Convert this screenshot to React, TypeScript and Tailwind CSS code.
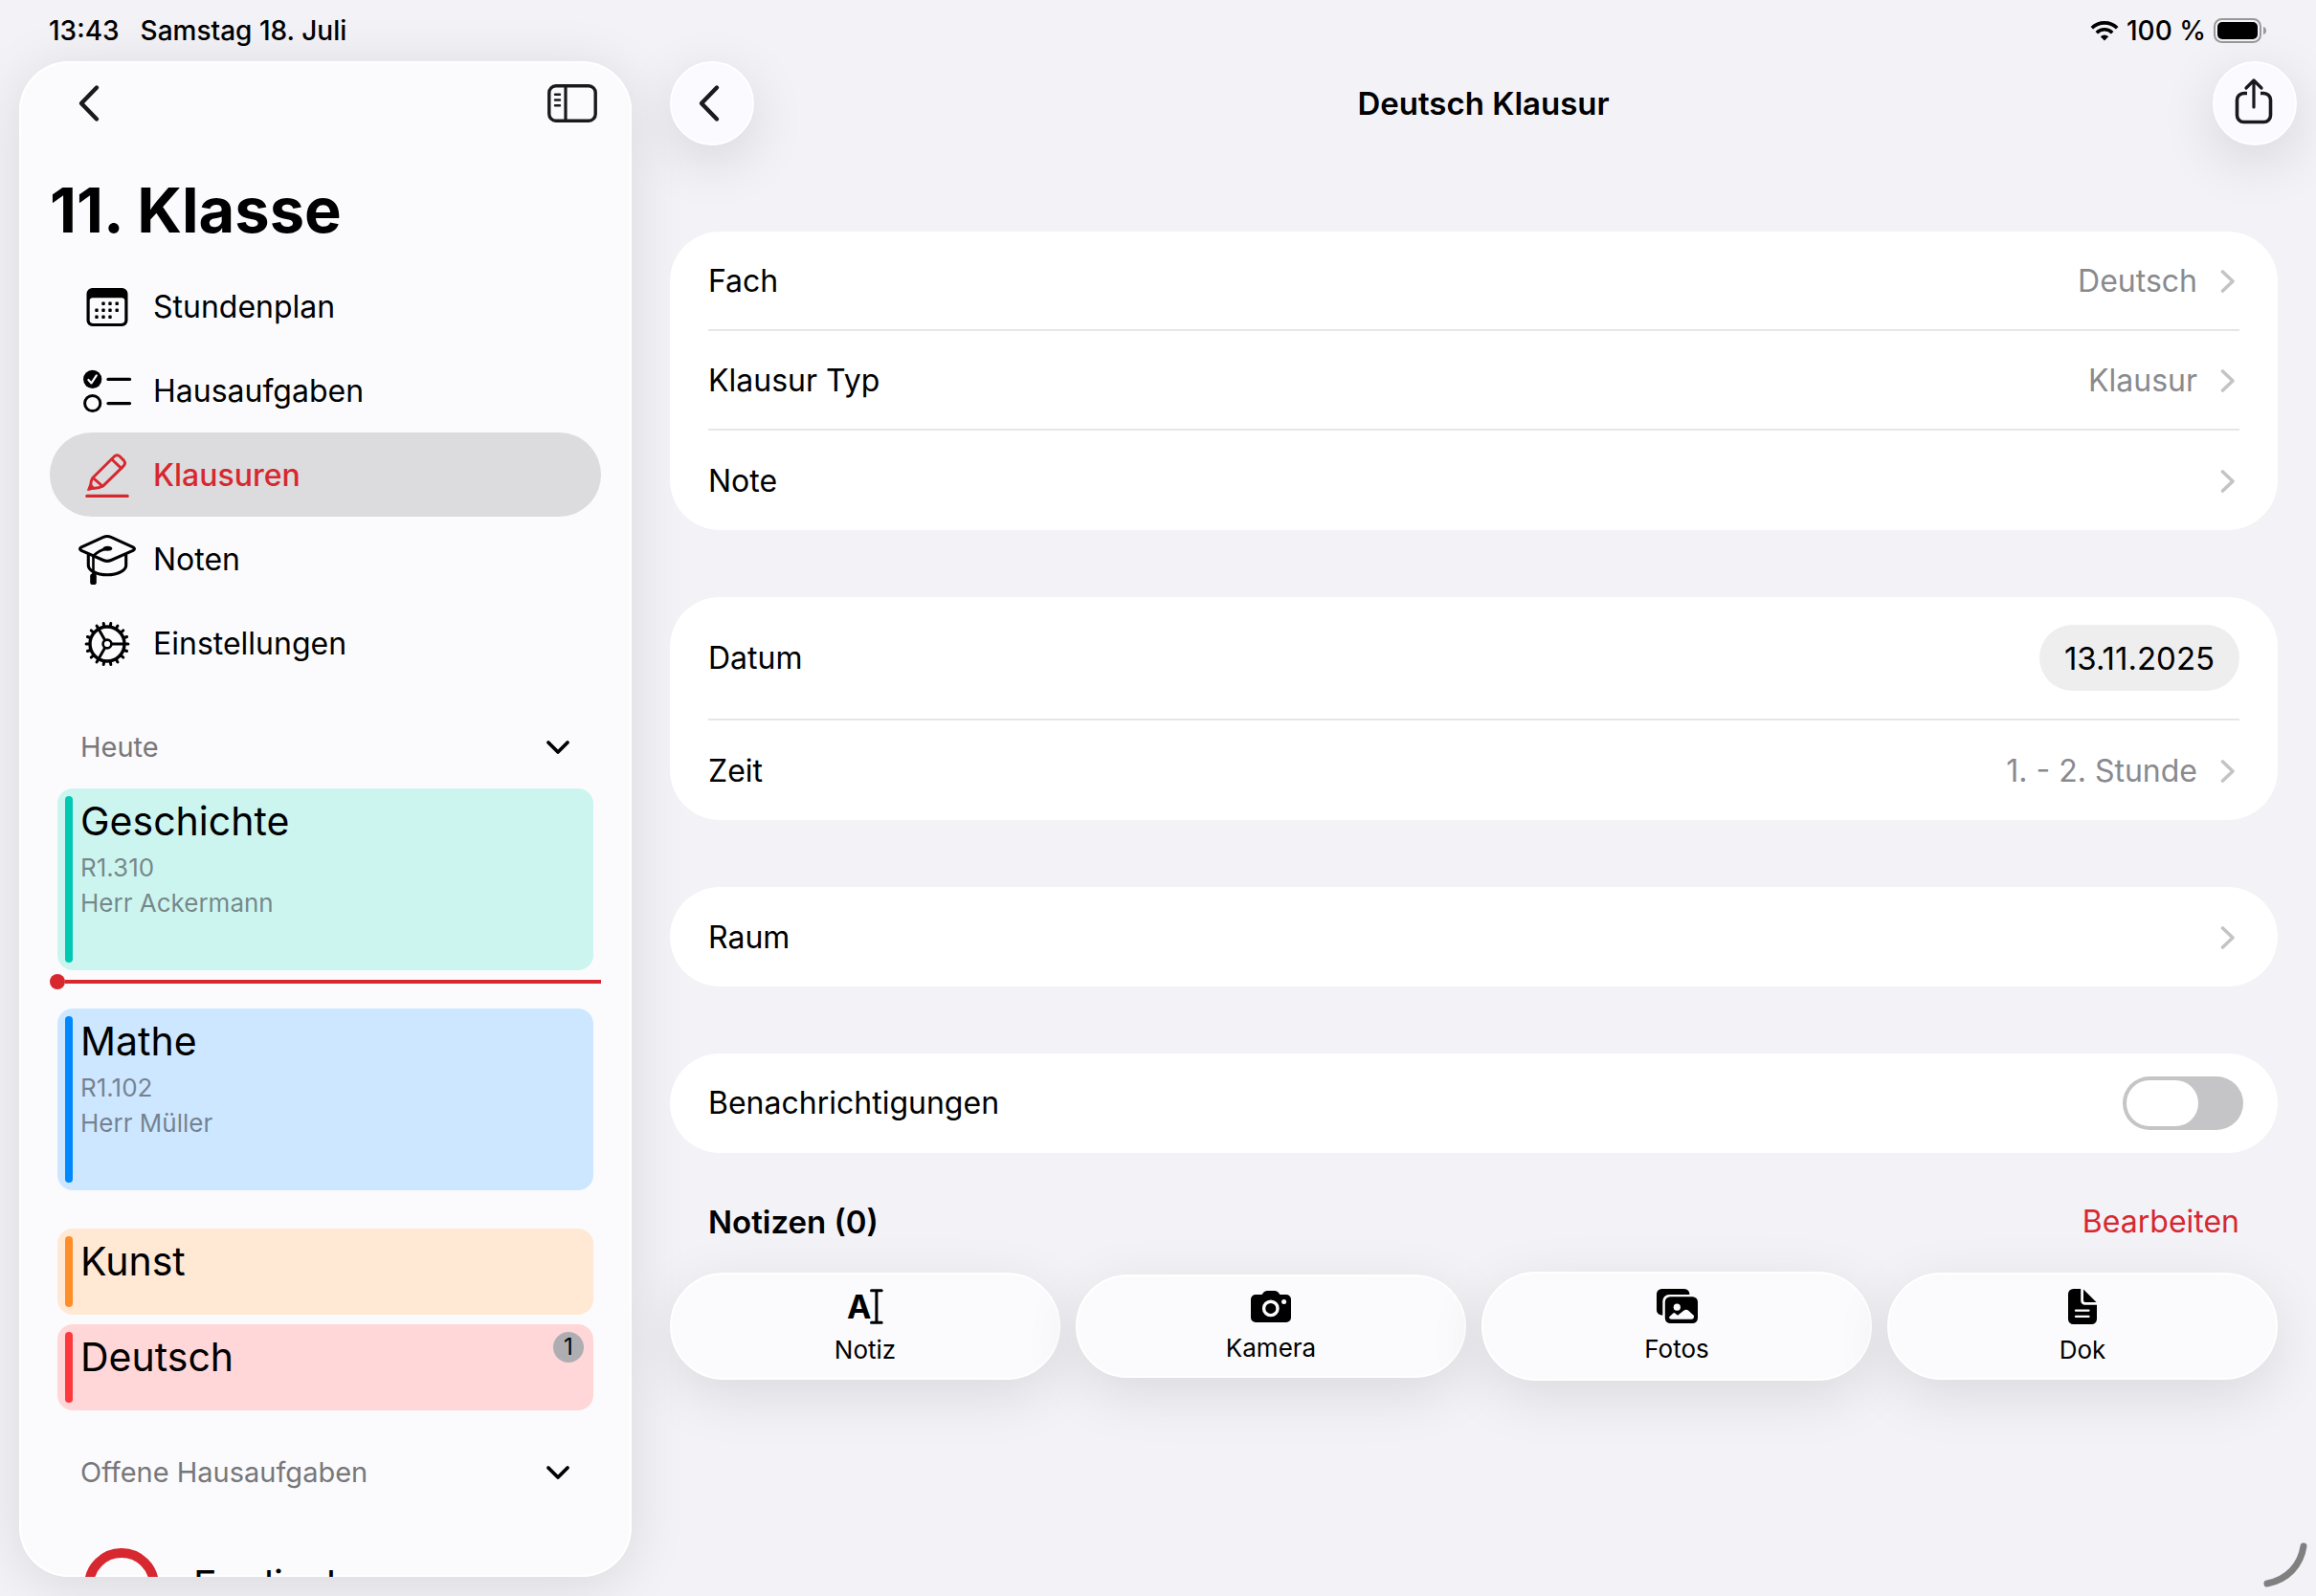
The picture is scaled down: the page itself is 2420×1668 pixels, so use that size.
import React, { useState } from 'react';

type IconProps = { className?: string };

const ChevronLeft: React.FC<IconProps> = ({ className }) => (
  <svg viewBox="0 0 24 40" className={className} fill="none" stroke="currentColor" strokeWidth="4.4" strokeLinecap="round" strokeLinejoin="round">
    <path d="M20 3.5 4 20l16 16.5" />
  </svg>
);

const ChevronRight: React.FC<IconProps> = ({ className }) => (
  <svg viewBox="0 0 16 26" className={className} fill="none" stroke="currentColor" strokeWidth="3.6" strokeLinecap="round" strokeLinejoin="round">
    <path d="M2.5 3 13 13 2.5 23" />
  </svg>
);

const ChevronDown: React.FC<IconProps> = ({ className }) => (
  <svg viewBox="0 0 26 16" className={className} fill="none" stroke="currentColor" strokeWidth="3.8" strokeLinecap="round" strokeLinejoin="round">
    <path d="M3 3 13 13 23 3" />
  </svg>
);

const SidebarIcon: React.FC<IconProps> = ({ className }) => (
  <svg viewBox="0 0 52 40" className={className} fill="none" stroke="currentColor" strokeLinecap="round">
    <rect x="1.8" y="1.8" width="48.4" height="36.4" rx="7" strokeWidth="3.4" />
    <path d="M19 2v36" strokeWidth="3.2" />
    <path d="M8 10.7h5M8 16.5h5M8 22.3h5" strokeWidth="2.4" />
  </svg>
);

const ShareIcon: React.FC<IconProps> = ({ className }) => (
  <svg viewBox="0 0 40 50" className={className} fill="none" stroke="currentColor" strokeWidth="3.6" strokeLinecap="round" strokeLinejoin="round">
    <path d="M13 16.5H9.5a7 7 0 0 0-7 7v16a7 7 0 0 0 7 7h21a7 7 0 0 0 7-7v-16a7 7 0 0 0-7-7H27" strokeLinecap="butt" />
    <path d="M20 31V3.5M12 11l8-8 8 8" strokeWidth="3.2" />
  </svg>
);

const WifiIcon: React.FC<IconProps> = ({ className }) => (
  <svg viewBox="0 0 30 22" className={className} fill="none" stroke="currentColor" strokeWidth="3.6">
    <path d="M1.8 8.3a18.7 18.7 0 0 1 26.4 0" />
    <path d="M6.8 13.2a11.6 11.6 0 0 1 16.4 0" />
    <path d="M15 21.5 10.8 17.3a6 6 0 0 1 8.4 0Z" fill="currentColor" stroke="none" />
  </svg>
);

const BatteryIcon: React.FC<IconProps> = ({ className }) => (
  <svg viewBox="0 0 56 26" className={className}>
    <rect x="1" y="1" width="48" height="24" rx="7.5" fill="none" stroke="#99999c" strokeWidth="2" />
    <rect x="4" y="4" width="42" height="18" rx="5" fill="#000" />
    <path d="M52 9c2 .6 3 2 3 4s-1 3.400-3 4Z" fill="#99999c" />
  </svg>
);

const CalendarIcon: React.FC<IconProps> = ({ className }) => (
  <svg viewBox="-32 -28 64 56" className={className} fill="currentColor">
    <path
      fillRule="evenodd"
      d="M-15.500-20h31a6 6 0 0 1 6 6v28a6 6 0 0 1-6 6h-31a6 6 0 0 1-6-6v-28a6 6 0 0 1 6-6ZM-15-9.700a3.300 3.300 0 0 0-3.300 3.300v20a3.300 3.300 0 0 0 3.300 3.300h30a3.300 3.300 0 0 0 3.300-3.300v-20a3.300 3.300 0 0 0-3.300-3.300Z"
    />
    {[[-4, -3.7], [3, -3.7], [10.2, -3.7], [-11, 3.3], [-4, 3.3], [3, 3.3], [10.2, 3.3], [-11, 10.3], [-4, 10.3], [3, 10.3]].map(([x, y]) => (
      <rect key={`${x}-${y}`} x={x - 1.7} y={y - 1.7} width="3.4" height="3.4" rx="0.8" />
    ))}
  </svg>
);

const ChecklistIcon: React.FC<IconProps> = ({ className }) => (
  <svg viewBox="-32 -28 64 56" className={className} fill="none" stroke="currentColor" strokeLinecap="round" strokeLinejoin="round">
    <circle cx="-15.3" cy="-12.6" r="9.6" fill="currentColor" stroke="none" />
    <path d="M-19.600-12 -16.500-8.600 -11.200-16.600" stroke="#fbfbfd" strokeWidth="2.2" />
    <circle cx="-15.3" cy="12.5" r="8.1" strokeWidth="3" />
    <path d="M1-12.600h22.500M1 12.600h22.500" strokeWidth="3.4" />
  </svg>
);

const PencilIcon: React.FC<IconProps> = ({ className }) => (
  <svg viewBox="-32 -28 64 56" className={className} fill="none" stroke="currentColor" strokeWidth="2.9" strokeLinecap="round" strokeLinejoin="round">
    <path d="M-15 2.200 7.200-19.800Q10.300-22.600 13.400-19.800L17.300-15.900Q20-12.800 17-9.900L-4 10.600Q-10 13.800-14.500 13.200L-19 14.200-17.300 9.800Q-17 5-15 2.200Z" />
    <path d="M4.800-17 14.600-7.600M-14.600 2.600-5 11" />
    <path d="M-20.600 15.200-17 8-13 13.600Z" fill="currentColor" strokeWidth="0.6" />
    <path d="M-21.200 21.400h42.400" strokeWidth="3.1" />
  </svg>
);

const GraduationIcon: React.FC<IconProps> = ({ className }) => (
  <svg viewBox="-32 -28 64 56" className={className} fill="none" stroke="currentColor" strokeWidth="3.1" strokeLinecap="round" strokeLinejoin="round">
    <path d="M-27-13.200-4-23.600Q0-25.400 4-23.600L27-13.200Q30-11.400 27-9.600L4 .5Q0 2.300-4 .5L-27-9.600Q-30-11.400-27-13.200Z" />
    <path d="M-19.700-5V6C-19.700 10.500-12 15.700 0 15.700S19.700 10.500 19.700 6V-5" />
    <path d="M0-11.600C-6-10.500-11-7.500-14.500-4V15" strokeWidth="2.6" />
    <ellipse cx="0.4" cy="-11.700" rx="4.800" ry="2.500" fill="currentColor" stroke="none" />
    <rect x="-17.8" y="14.600" width="6.600" height="11.400" rx="2.600" fill="currentColor" stroke="none" />
  </svg>
);

const GearIcon: React.FC<IconProps> = ({ className }) => (
  <svg viewBox="-32 -28 64 56" className={className} fill="none" stroke="currentColor" strokeLinecap="round">
    <circle r="18" strokeWidth="3.4" />
    <circle r="4.4" strokeWidth="2.6" />
    {[0, 120, 240].map((a) => (
      <path key={a} d="M5 0h12" strokeWidth="2.900" transform={`rotate(${a})`} />
    ))}
    {Array.from({ length: 18 }, (_, i) => (
      <path key={i} d="M19 0h2.900" strokeWidth="3" transform={`rotate(${i * 20})`} />
    ))}
  </svg>
);

const TextCursorIcon: React.FC<IconProps> = ({ className }) => (
  <svg viewBox="0 0 37 37" className={className} overflow="visible">
    <text x="-1" y="31" fontSize="34" fontWeight="700">A</text>
    <path d="M24.500 1.700h10.700M24.500 35.300h10.700M29.900 2v33" fill="none" stroke="currentColor" strokeWidth="3" strokeLinecap="round" />
  </svg>
);

const CameraIcon: React.FC<IconProps> = ({ className }) => (
  <svg viewBox="0 0 42 33" className={className} fill="currentColor">
    <path d="M5 4h6.500l2-2.400A4.500 4.500 0 0 1 17 0h8a4.500 4.500 0 0 1 3.500 1.600l2 2.400H37a5 5 0 0 1 5 5v19a5 5 0 0 1-5 5H5a5 5 0 0 1-5-5V9a5 5 0 0 1 5-5Z" />
    <circle cx="20.800" cy="18.400" r="7.200" fill="none" stroke="#fbfbfd" strokeWidth="3.400" />
    <circle cx="34.600" cy="11.500" r="2.500" fill="#fbfbfd" />
  </svg>
);

const PhotosIcon: React.FC<IconProps> = ({ className }) => (
  <svg viewBox="0 0 43 36" className={className} fill="currentColor">
    <path d="M5.500 0h23.500a5.500 5.500 0 0 1 5.400 6H13a6.700 6.700 0 0 0-6.700 6.700V27.500C2.600 27.500 0 25.400 0 22V5.500A5.500 5.500 0 0 1 5.500 0Z" />
    <rect x="8.800" y="8.200" width="34.200" height="27.800" rx="5.500" />
    <circle cx="21.300" cy="19.200" r="3.600" fill="#fbfbfd" />
    <path d="M13 29.500 17.300 25.500Q18.300 24.600 19.300 25.500L22 27.800 28.600 22.500Q31 21 33 22.600L39 28v1.600Q38.700 31.800 36.500 31.800H15.500Q13.200 31.800 13 29.500Z" fill="#fbfbfd" />
  </svg>
);

const DocumentIcon: React.FC<IconProps> = ({ className }) => (
  <svg viewBox="0 0 30 37" className={className} fill="currentColor">
    <path d="M5.500 0h7.700v12.500a4.300 4.300 0 0 0 4.300 4.300H30v14.700a5.500 5.500 0 0 1-5.500 5.500h-19A5.500 5.500 0 0 1 0 31.500v-26A5.500 5.500 0 0 1 5.500 0Z" />
    <path d="M16 .5 29.500 14H18a2 2 0 0 1-2-2Z" />
    <path d="M8 22.700h13.500M8 28.900h13.500" fill="none" stroke="#fbfbfd" strokeWidth="2.300" strokeLinecap="round" />
  </svg>
);

const MENU = [
  { label: 'Stundenplan', icon: CalendarIcon },
  { label: 'Hausaufgaben', icon: ChecklistIcon },
  { label: 'Klausuren', icon: PencilIcon },
  { label: 'Noten', icon: GraduationIcon },
  { label: 'Einstellungen', icon: GearIcon },
];

const ATTACHMENTS = [
  { label: 'Notiz', icon: TextCursorIcon, size: 'h-[112px]', iconSize: 'w-[37px] h-[37px]' },
  { label: 'Kamera', icon: CameraIcon, size: 'h-[108px]', iconSize: 'w-[42px] h-[33px]' },
  { label: 'Fotos', icon: PhotosIcon, size: 'h-[114px]', iconSize: 'w-[43px] h-[36px]' },
  { label: 'Dok', icon: DocumentIcon, size: 'h-[112px]', iconSize: 'w-[30px] h-[37px]' },
];

const SectionHeader: React.FC<{ title: string }> = ({ title }) => (
  <button type="button" className="mt-5 flex h-[88px] w-full items-center justify-between pl-8 pr-8 pt-0.5 text-[29px] text-[#77777a]">
    {title}
    <ChevronDown className="h-4 w-[26px] text-black" />
  </button>
);

type LessonProps = {
  subject: string;
  room?: string;
  teacher?: string;
  card: string;
  bar: string;
  badge?: number;
};

const Lesson: React.FC<LessonProps> = ({ subject, room, teacher, card, bar, badge }) => (
  <article className={`mx-2 flex rounded-2xl p-2 ${card}`}>
    <div className={`w-2 shrink-0 rounded-full ${bar}`} />
    <div className="flex-1 pl-2 text-[26px] leading-[37px] text-[#3c3c43]/60">
      <h3 className="mb-1 text-[41px] leading-[52px] text-black">{subject}</h3>
      {room && <p>{room}</p>}
      {teacher && <p>{teacher}</p>}
    </div>
    {badge && (
      <span className="mr-0.5 flex h-8 w-8 items-center justify-center rounded-full bg-[#aeaeb2] text-2xl">{badge}</span>
    )}
  </article>
);

const Group: React.FC<{ children: React.ReactNode }> = ({ children }) => (
  <section className="divide-y-2 divide-[#e6e6e6] rounded-[52px] bg-white px-10">{children}</section>
);

const LinkRow: React.FC<{ label: string; value?: string }> = ({ label, value }) => (
  <button type="button" className="flex h-[104px] w-full items-center pt-0.5 text-left">
    <span className="flex-1">{label}</span>
    <span className="text-[#8a8a8e]">{value}</span>
    <ChevronRight className="ml-6 mr-1 h-[26px] w-4 text-[#c4c4c7]" />
  </button>
);

const Sidebar: React.FC = () => (
  <aside className="w-[640px] shrink-0 overflow-y-auto rounded-[52px] bg-[#fbfbfd] px-8 shadow-[0_8px_60px_rgba(0,0,0,0.11),inset_0_0_0_2px_#fff] [scrollbar-width:none]">
    <div className="flex h-[88px] items-center justify-between pl-[29px] pr-1">
      <button type="button" aria-label="Zurück" className="text-[#1a1a1c]">
        <ChevronLeft className="h-10 w-6" />
      </button>
      <button type="button" aria-label="Seitenleiste" className="text-[#1a1a1c]">
        <SidebarIcon className="h-10 w-[52px]" />
      </button>
    </div>
    <h1 className="pb-4 pt-7 text-[65px] font-bold leading-[80px]">11. Klasse</h1>

    <nav>
      {MENU.map(({ label, icon: Icon }) => (
        <a
          key={label}
          href="#"
          className={`flex h-[88px] items-center gap-4 rounded-full pl-7 pt-0.5 text-[32px] ${label === 'Klausuren' ? 'bg-[#dcdcde] font-medium text-[#d7282f]' : ''}`}
        >
          <Icon className="h-14 w-16" />
          {label}
        </a>
      ))}
    </nav>

    <SectionHeader title="Heute" />
    <Lesson subject="Geschichte" room="R1.310" teacher="Herr Ackermann" card="h-[190px] bg-[#ccf5f0]" bar="bg-[#00c8b3]" />
    {/* current time marker */}
    <div className="flex h-10 items-start pt-1">
      <div className="flex w-full items-center">
        <div className="h-4 w-4 rounded-full bg-[#d7282f]" />
        <div className="h-1 flex-1 bg-[#d7282f]" />
      </div>
    </div>
    <Lesson subject="Mathe" room="R1.102" teacher="Herr Müller" card="h-[190px] bg-[#cce7ff]" bar="bg-[#0088ff]" />
    <div className="mt-10 space-y-2.5">
      <Lesson subject="Kunst" card="h-[90px] bg-[#ffe8d4]" bar="bg-[#ff8d28]" />
      <Lesson subject="Deutsch" card="h-[90px] bg-[#ffd7d8]" bar="bg-[#ff383c]" badge={1} />
    </div>

    <SectionHeader title="Offene Hausaufgaben" />
    <div className="flex items-center gap-9 pl-9 pt-9">
      <div className="h-[78px] w-[78px] rounded-full border-[10px] border-[#d7282f]" />
      <span className="text-[41px]">Englisch</span>
    </div>
  </aside>
);

export default function App() {
  const [notify, setNotify] = useState(false);
  const [date, setDate] = useState('13.11.2025');

  return (
    <div className="relative flex h-screen flex-col overflow-hidden bg-[#f2f2f7] font-['Inter','Liberation_Sans',sans-serif] text-[32px] text-black">
      <header className="flex h-16 shrink-0 items-center justify-between pl-[51px] pr-[51px] text-[28px] font-medium">
        <div className="flex gap-[22px]">
          <span>13:43</span>
          <span>Samstag 18. Juli</span>
        </div>
        <div className="flex items-center gap-2">
          <WifiIcon className="h-[22px] w-[30px]" />
          <span>100 %</span>
          <BatteryIcon className="h-[26px] w-14" />
        </div>
      </header>

      <div className="flex min-h-0 flex-1 gap-10 pb-5 pl-5">
        <Sidebar />

        <main className="flex-1 pr-5">
          <div className="flex items-center justify-between">
            <button type="button" aria-label="Zurück" className="flex h-[88px] w-[88px] items-center justify-center rounded-full border-2 border-white bg-[#fafaff] pr-1.5 text-[#1a1a1c] shadow-[0_16px_60px_rgba(0,0,0,0.12)]">
              <ChevronLeft className="h-10 w-6" />
            </button>
            <h2 className="pt-0.5 text-[33px] font-semibold">Deutsch Klausur</h2>
            <button type="button" aria-label="Teilen" className="flex h-[88px] w-[88px] items-center justify-center rounded-full border-2 border-white bg-[#fafaff] pb-1 pr-0.5 text-[#1a1a1c] shadow-[0_16px_60px_rgba(0,0,0,0.12)]">
              <ShareIcon className="h-[50px] w-10" />
            </button>
          </div>

          <div className="mr-5 mt-[90px] space-y-[70px]">
            <Group>
              <LinkRow label="Fach" value="Deutsch" />
              <LinkRow label="Klausur Typ" value="Klausur" />
              <LinkRow label="Note" />
            </Group>
            <Group>
              <div className="flex h-[129px] items-center justify-between">
                <label htmlFor="datum">Datum</label>
                <input
                  id="datum"
                  value={date}
                  onChange={(e) => setDate(e.target.value)}
                  className="h-[69px] w-[209px] rounded-full bg-[#eeeeee] text-center text-[33px]"
                />
              </div>
              <LinkRow label="Zeit" value="1. - 2. Stunde" />
            </Group>
            <Group>
              <LinkRow label="Raum" />
            </Group>
            <Group>
              <div className="flex h-[104px] items-center justify-between">
                <label htmlFor="benachrichtigungen">Benachrichtigungen</label>
                <input
                  id="benachrichtigungen"
                  type="checkbox"
                  role="switch"
                  checked={notify}
                  onChange={(e) => setNotify(e.target.checked)}
                  className="-mr-1 h-14 w-[126px] appearance-none rounded-full bg-[#c5c5c7] p-1 before:block before:h-12 before:w-[75px] before:rounded-full before:bg-white checked:bg-[#34c759] checked:before:ml-auto"
                />
              </div>
            </Group>
          </div>

          <div className="mr-5 mt-12 flex items-center justify-between px-10 leading-[48px]">
            <h3 className="text-[33px] font-semibold leading-[48px]">Notizen (0)</h3>
            <button type="button" className="text-[#d7282f]">Bearbeiten</button>
          </div>

          <div className="mr-5 mt-7 grid grid-cols-4 items-center gap-4">
            {ATTACHMENTS.map(({ label, icon: Icon, size, iconSize }) => (
              <button
                key={label}
                type="button"
                className={`flex flex-col items-center justify-center gap-3 rounded-full border-2 border-white bg-[#fbfbfd] text-[26px] leading-[30px] shadow-[0_16px_60px_rgba(0,0,0,0.1)] ${size}`}
              >
                <Icon className={iconSize} />
                {label}
              </button>
            ))}
          </div>
        </main>
      </div>

      {/* window resize handle */}
      <svg viewBox="0 0 56 56" className="absolute bottom-1 right-1 h-14 w-14" fill="none" stroke="#808080" strokeWidth="7" strokeLinecap="round">
        <path d="M47 8C44 28 30 43 9 47" />
      </svg>
    </div>
  );
}
